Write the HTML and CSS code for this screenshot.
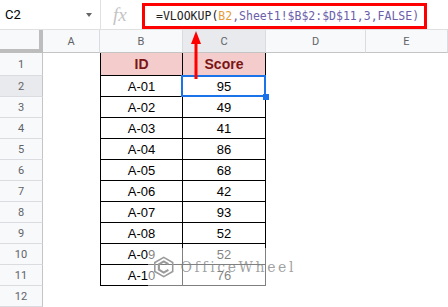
FILE: index.html
```html
<!DOCTYPE html>
<html lang="en">
<head>
  <meta charset="UTF-8">
  <title>VLOOKUP</title>
  <link rel="stylesheet" href="styles.css">
</head>
<body>
  <div class="app">
    <div class="formula-bar">
      <div class="name-box"><span>C2</span><span class="caret"></span></div>
      <div class="fx">fx</div>
      <div class="formula">
        <span class="fn">=VLOOKUP(</span><span class="ref">B2</span><span class="rng">,Sheet1!$B$2:$D$11,3,FALSE)</span>
      </div>
    </div>

    <div class="sheet">
      <div class="corner"></div>
      <div class="col-head">A</div>
      <div class="col-head">B</div>
      <div class="col-head active">C</div>
      <div class="col-head">D</div>
      <div class="col-head">E</div>

      <div class="row-head">1</div><div></div>
      <div class="cell title first">ID</div><div class="cell title">Score</div><div></div><div></div>

      <div class="row-head active">2</div><div></div>
      <div class="cell first">A-01</div><div class="cell selected">95</div><div></div><div></div>

      <div class="row-head">3</div><div></div>
      <div class="cell first">A-02</div><div class="cell">49</div><div></div><div></div>

      <div class="row-head">4</div><div></div>
      <div class="cell first">A-03</div><div class="cell">41</div><div></div><div></div>

      <div class="row-head">5</div><div></div>
      <div class="cell first">A-04</div><div class="cell">86</div><div></div><div></div>

      <div class="row-head">6</div><div></div>
      <div class="cell first">A-05</div><div class="cell">68</div><div></div><div></div>

      <div class="row-head">7</div><div></div>
      <div class="cell first">A-06</div><div class="cell">42</div><div></div><div></div>

      <div class="row-head">8</div><div></div>
      <div class="cell first">A-07</div><div class="cell">93</div><div></div><div></div>

      <div class="row-head">9</div><div></div>
      <div class="cell first">A-08</div><div class="cell">52</div><div></div><div></div>

      <div class="row-head">10</div><div></div>
      <div class="cell first">A-09</div><div class="cell">52</div><div></div><div></div>

      <div class="row-head">11</div><div></div>
      <div class="cell first">A-10</div><div class="cell">76</div><div></div><div></div>

      <div class="row-head">12</div><div></div><div></div><div></div><div></div><div></div>
    </div>

    <!-- arrow from the formula box down to C2 -->
    <svg class="arrow" width="12" height="48" viewBox="0 0 12 48">
      <polygon points="6,0 11,13 1,13" fill="#f00"/>
      <rect x="4.5" y="12" width="3" height="36" fill="#f00"/>
    </svg>

    <div class="watermark">
      <svg width="30" height="30" viewBox="0 0 30 30">
        <polygon points="15,1.5 27.5,8.7 27.5,21.3 15,28.5 2.5,21.3 2.5,8.7" fill="none" stroke="#9a9a9a" stroke-width="2.2"/>
        <polyline points="21.5,11 15,7.2 8.2,11.2 8.2,18.8 15,22.8 21.5,19" fill="none" stroke="#9a9a9a" stroke-width="3"/>
      </svg>
      <span>OfficeWheel</span>
    </div>
  </div>
</body>
</html>
```

FILE: styles.css
```css
* {
  box-sizing: border-box;
  margin: 0;
  padding: 0;
}

body {
  width: 448px;
  height: 307px;
  overflow: hidden;
  background-color: #fff;
  font-family: Roboto, 'Liberation Sans', Arial, sans-serif;
}

.app {
  position: relative;
}

/* formula bar */

.formula-bar {
  display: flex;
  height: 30px;
  border-bottom: 1px solid #e0e0e0;
}

.name-box {
  width: 101px;
  display: flex;
  align-items: center;
  justify-content: space-between;
  padding: 0 8px 0 5px;
  border-right: 1px solid #e0e0e0;
  font-size: 13px;
  color: #000;
}

.caret {
  width: 0;
  height: 0;
  border-left: 3.5px solid transparent;
  border-right: 3.5px solid transparent;
  border-top: 4px solid #666;
}

.fx {
  width: 41px;
  display: flex;
  align-items: center;
  padding-left: 12px;
  font: italic 19px 'Liberation Serif', serif;
  color: #c4c4c4;
}

.formula {
  margin-top: 3px;
  width: 285px;
  height: 26px;
  display: flex;
  align-items: center;
  padding-left: 11px;
  border: 3px solid #f00;
  font: 11.5px 'DejaVu Sans Mono', monospace;
  white-space: nowrap;
}

.fn {
  color: #222;
}

.ref {
  color: #e69b3a;
}

.rng {
  color: #6b5eaa;
}

/* grid */

.sheet {
  display: grid;
  grid-template-columns: 43px 57px 83px 83px 100px 1fr;
  grid-template-rows: 23px 23px repeat(11, 21px);
}

.corner {
  background-color: #f8f9fa;
  border-right: 4px solid #bdbdbd;
  border-bottom: 4px solid #bdbdbd;
}

.col-head {
  display: flex;
  align-items: center;
  justify-content: center;
  background-color: #f8f9fa;
  border-right: 1px solid #dadce0;
  border-bottom: 1px solid #c4c4c4;
  font-size: 11px;
  color: #5f6368;
}

.row-head {
  display: flex;
  align-items: center;
  justify-content: center;
  background-color: #f8f9fa;
  border-right: 1px solid #c4c4c4;
  border-bottom: 1px solid #dadce0;
  font-size: 11px;
  color: #5f6368;
}

.col-head.active,
.row-head.active {
  background-color: #e8eaed;
}

.cell {
  display: flex;
  align-items: flex-end;
  justify-content: center;
  padding-bottom: 2px;
  border-right: 1px solid #000;
  border-bottom: 1px solid #000;
  font: 13px 'Liberation Sans', Arial, sans-serif;
  color: #000;
}

.cell.first {
  border-left: 1px solid #000;
}

.cell.title {
  padding-bottom: 3px;
  background-color: #f4cccc;
  font-weight: bold;
  font-size: 14px;
  color: #7a1515;
}

.cell.selected {
  position: relative;
}

.cell.selected::after {
  content: '';
  position: absolute;
  left: -2px;
  top: -1px;
  right: -1px;
  bottom: -1px;
  border: 2px solid #1a73e8;
}

.cell.selected::before {
  content: '';
  position: absolute;
  right: -4px;
  bottom: -4px;
  width: 6px;
  height: 6px;
  background-color: #1a73e8;
  z-index: 1;
}

/* overlays */

.arrow {
  position: absolute;
  left: 190px;
  top: 31px;
}

.watermark {
  position: absolute;
  left: 148px;
  top: 248px;
  width: 148px;
  height: 38px;
  display: flex;
  align-items: center;
  gap: 6px;
  padding-left: 5px;
  background-color: rgba(255, 255, 255, 0.5);
}

.watermark span {
  font: 14px 'DejaVu Serif', serif;
  letter-spacing: 2.6px;
  color: rgba(130, 130, 130, 0.75);
}
```
